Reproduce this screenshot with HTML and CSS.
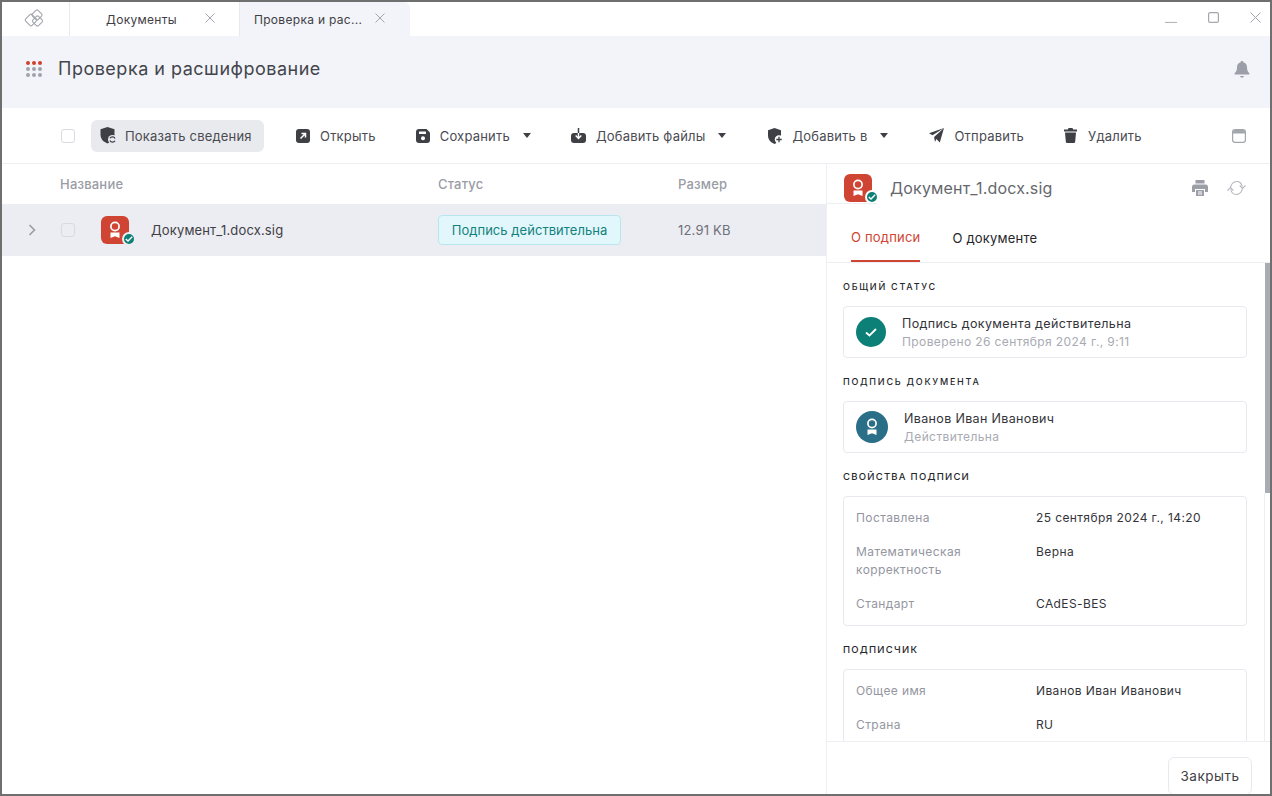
FILE: index.html
```html
<!DOCTYPE html>
<html lang="ru">
<head>
  <meta charset="UTF-8" />
  <title>Проверка и расшифрование</title>
  <link rel="stylesheet" href="styles.css">
</head>
<body>
<div class="window">

  <div class="tabbar">
    <div class="logo-cell">
      <svg width="24" height="22" viewBox="0 0 24 22" fill="none" stroke="#a4a6ae" stroke-width="1.100">
        <rect x="4.500" y="7.500" width="9" height="9" rx="1.500" transform="rotate(-45 9 12)"/>
        <rect x="11" y="3" width="8" height="8" rx="1.500" transform="rotate(-45 15 7)"/>
        <rect x="11.500" y="9" width="8" height="8" rx="1.500" transform="rotate(-45 15.500 13)"/>
      </svg>
    </div>
    <div class="tab">
      <span class="tab-title">Документы</span>
      <svg class="tab-close" width="10" height="10" viewBox="0 0 10 10" stroke="#a4a6ae" stroke-width="1"><path d="M.5.5l9 9M9.500.5l-9 9"/></svg>
    </div>
    <div class="tab tab-active">
      <span class="tab-title">Проверка и рас...</span>
      <svg class="tab-close" width="10" height="10" viewBox="0 0 10 10" stroke="#a4a6ae" stroke-width="1"><path d="M.5.5l9 9M9.500.5l-9 9"/></svg>
    </div>
    <div class="win-controls">
      <svg width="12" height="11" viewBox="0 0 12 11" stroke="#b4b6bd" stroke-width="1.200"><path d="M0 10.500h12"/></svg>
      <svg width="11" height="11" viewBox="0 0 11 11" fill="none" stroke="#a4a6ae" stroke-width="1.200"><rect x=".6" y=".6" width="9.800" height="9.800" rx="1.500"/></svg>
      <svg width="11" height="11" viewBox="0 0 11 11" stroke="#a4a6ae" stroke-width="1"><path d="M.5.5l10 10M10.500.5l-10 10"/></svg>
    </div>
  </div>

  <div class="header">
    <div class="dots">
      <i class="dot red"></i><i class="dot red"></i><i class="dot red"></i>
      <i class="dot"></i><i class="dot"></i><i class="dot"></i>
      <i class="dot"></i><i class="dot"></i><i class="dot"></i>
    </div>
    <h1>Проверка и расшифрование</h1>
    <svg class="bell" width="16" height="17" viewBox="0 0 16 17" fill="#9c9ea8"><path d="M8 0c.8 0 1.300.5 1.400 1.200C11.700 1.800 13 3.800 13 6.200c0 3 .7 4.500 2.300 6 .4.400.2 1.300-.6 1.300H1.300c-.8 0-1-.9-.6-1.300C2.300 10.700 3 9.200 3 6.200c0-2.400 1.300-4.400 3.600-5C6.700.5 7.200 0 8 0z"/><path d="M5.800 15h4.400c-.3.900-1.200 1.500-2.200 1.500S6.100 15.900 5.800 15z"/></svg>
  </div>

  <div class="toolbar">
    <span class="checkbox toolbar-check"></span>
    <button class="tool tool-active">
      <svg width="17" height="17" viewBox="0 0 17 17"><path fill="#3f4045" d="M7.500 0l7 2.300v5.200C14.500 12 11.500 15 7.500 16.500 3.500 15 .5 12 .5 7.500V2.300z"/><circle cx="12.500" cy="12.500" r="4.500" fill="#e9eaee"/><path fill="none" stroke="#3f4045" stroke-width="1.300" d="M15 11.500a2.800 2.800 0 0 0-5-.2M10 13.500a2.800 2.800 0 0 0 5 .2"/></svg>
      Показать сведения
    </button>
    <button class="tool tool-open">
      <svg width="14" height="14" viewBox="0 0 14 14"><rect width="14" height="14" rx="3" fill="#3f4045"/><path d="M4.500 9.500l5-5M5.500 4.500h4v4" fill="none" stroke="#fff" stroke-width="1.500"/></svg>
      Открыть
    </button>
    <button class="tool tool-save">
      <svg width="14" height="14" viewBox="0 0 14 14"><path fill="#3f4045" d="M3 0h7.500L14 3.500V11a3 3 0 0 1-3 3H3a3 3 0 0 1-3-3V3a3 3 0 0 1 3-3z"/><rect x="3" y="2.500" width="7" height="2.500" rx=".5" fill="#fff"/><circle cx="7" cy="9.300" r="2" fill="#fff"/></svg>
      Сохранить
      <i class="caret"></i>
    </button>
    <button class="tool tool-add">
      <svg width="15" height="15" viewBox="0 0 15 15"><path fill="#3f4045" d="M3 5h9a3 3 0 0 1 3 3v4a3 3 0 0 1-3 3H3a3 3 0 0 1-3-3V8a3 3 0 0 1 3-3z"/><path d="M7.500 5v4.500M4.700 7.500l2.800 3 2.800-3" fill="none" stroke="#fff" stroke-width="1.400"/><path d="M7.500 0v5" stroke="#3f4045" stroke-width="1.500"/></svg>
      Добавить файлы
      <i class="caret"></i>
    </button>
    <button class="tool tool-addto">
      <svg width="15" height="16" viewBox="0 0 15 16"><path fill="#3f4045" d="M6.500 0l6.500 2.200v5.300C13 11.500 10.500 14.500 6.500 16 2.500 14.500 0 11.500 0 7.500V2.200z"/><circle cx="11" cy="11.500" r="4.200" fill="#fff"/><path d="M11 8.800v5.400M8.300 11.500h5.400" stroke="#3f4045" stroke-width="1.300"/></svg>
      Добавить в
      <i class="caret"></i>
    </button>
    <button class="tool tool-send">
      <svg width="15" height="15" viewBox="0 0 15 15"><path fill="#3f4045" d="M15 0L10.800 14.500 7.400 11 6 14l-.9-5L15 0 3.500 7.300 0 5.300z"/></svg>
      Отправить
    </button>
    <button class="tool tool-delete">
      <svg width="13" height="15" viewBox="0 0 13 15"><path fill="#3f4045" d="M4.500 0h4l.6 1.500H13v2H0v-2h3.900zM1 4.500h11l-.8 9a1.500 1.500 0 0 1-1.500 1.500H3.300a1.500 1.500 0 0 1-1.500-1.500z"/></svg>
      Удалить
    </button>
    <svg class="panel-toggle" width="14" height="14" viewBox="0 0 14 14"><rect x=".6" y=".6" width="12.800" height="12.800" rx="2.400" fill="#fff" stroke="#a4a6ae" stroke-width="1.200"/><path d="M1 3a2 2 0 0 1 2-2h8a2 2 0 0 1 2 2v1.500H1z" fill="#a4a6ae"/></svg>
  </div>

  <div class="content">
    <div class="files">
      <div class="files-head">
        <span class="col-name">Название</span>
        <span class="col-status">Статус</span>
        <span class="col-size">Размер</span>
      </div>
      <div class="file-row">
        <svg class="chevron" width="8" height="12" viewBox="0 0 8 12" fill="none" stroke="#9a9ca5" stroke-width="1.600"><path d="M1.500 1l5 5-5 5"/></svg>
        <span class="checkbox row-check"></span>
        <span class="file-icon">
          <svg width="14" height="18" viewBox="0 0 14 18"><circle cx="7" cy="5.500" r="4.100" fill="none" stroke="#fff" stroke-width="1.700"/><path fill="#fff" d="M2.500 11.500h9v5.500L7 15.300 2.500 17z"/></svg>
          <span class="badge"><svg width="8" height="6" viewBox="0 0 8 6" fill="none" stroke="#fff" stroke-width="1.400"><path d="M.8 3l2.200 2L7.200.8"/></svg></span>
        </span>
        <span class="file-name">Документ_1.docx.sig</span>
        <span class="status-pill">Подпись действительна</span>
        <span class="file-size">12.91 KB</span>
      </div>
    </div>

    <aside class="details">
      <div class="details-head">
        <span class="file-icon">
          <svg width="14" height="18" viewBox="0 0 14 18"><circle cx="7" cy="5.500" r="4.100" fill="none" stroke="#fff" stroke-width="1.700"/><path fill="#fff" d="M2.500 11.500h9v5.500L7 15.300 2.500 17z"/></svg>
          <span class="badge badge-white"><svg width="8" height="6" viewBox="0 0 8 6" fill="none" stroke="#fff" stroke-width="1.400"><path d="M.8 3l2.200 2L7.200.8"/></svg></span>
        </span>
        <span class="details-title">Документ_1.docx.sig</span>
        <svg class="print" width="16" height="16" viewBox="0 0 16 16" fill="#9c9ea8"><path d="M3.500 0h9v3.500h-9z"/><path d="M2.500 4.500h11A2.500 2.500 0 0 1 16 7v5h-3v-3H3v3H0V7a2.500 2.500 0 0 1 2.500-2.500z"/><path d="M4 10h8v6H4z"/><path d="M6 12h4M6 14h4" stroke="#fff"/></svg>
        <svg class="refresh" width="19" height="16" viewBox="0 0 19 16" fill="none" stroke="#b4b6bd" stroke-width="1.100"><path d="M3.500 8.500C3.500 4.500 6.300 1.500 9.800 1.500c2.700 0 4.700 1.800 5.400 5"/><path d="M12.700 5.500l2.800 2.800 3-2.800"/><path d="M15.500 7.500c0 4-2.800 7-6.300 7-2.700 0-4.700-1.800-5.400-5"/><path d="M.5 10.500l3-2.800 2.800 2.800"/></svg>
      </div>
      <div class="details-tabs">
        <span class="dtab dtab-active">О подписи</span>
        <span class="dtab">О документе</span>
      </div>

      <div class="details-body">
        <div class="scroll-thumb"></div>
        <h2>ОБЩИЙ СТАТУС</h2>
        <div class="card card-status">
          <span class="round round-green"><svg width="12" height="9" viewBox="0 0 12 9" fill="none" stroke="#fff" stroke-width="1.800"><path d="M1 4.500l3.500 3L11 1"/></svg></span>
          <div class="card-text">
            <div class="card-main">Подпись документа действительна</div>
            <div class="card-sub">Проверено 26 сентября 2024 г., 9:11</div>
          </div>
        </div>

        <h2>ПОДПИСЬ ДОКУМЕНТА</h2>
        <div class="card card-status">
          <span class="round round-blue"><svg width="14" height="18" viewBox="0 0 14 18"><circle cx="7" cy="5.500" r="4.100" fill="none" stroke="#fff" stroke-width="1.700"/><path fill="#fff" d="M2.500 11.500h9v5.500L7 15.300 2.500 17z"/></svg></span>
          <div class="card-text">
            <div class="card-main">Иванов Иван Иванович</div>
            <div class="card-sub">Действительна</div>
          </div>
        </div>

        <h2 class="h2-tight">СВОЙСТВА ПОДПИСИ</h2>
        <div class="card card-props">
          <div class="prop"><span class="prop-key">Поставлена</span><span class="prop-val">25 сентября 2024 г., 14:20</span></div>
          <div class="prop"><span class="prop-key">Математическая корректность</span><span class="prop-val">Верна</span></div>
          <div class="prop"><span class="prop-key">Стандарт</span><span class="prop-val">CAdES-BES</span></div>
        </div>

        <h2 class="h2-tight">ПОДПИСЧИК</h2>
        <div class="card card-props">
          <div class="prop"><span class="prop-key">Общее имя</span><span class="prop-val">Иванов Иван Иванович</span></div>
          <div class="prop"><span class="prop-key">Страна</span><span class="prop-val">RU</span></div>
        </div>
      </div>

      <div class="details-foot">
        <button class="close-btn">Закрыть</button>
      </div>
    </aside>
  </div>
</div>
</body>
</html>
```

FILE: styles.css
```css
* {
  box-sizing: border-box;
}
html, body {
  margin: 0;
  height: 100%;
  overflow: hidden;
}
body {
  font-family: Inter, "Noto Sans", sans-serif;
  font-size: 13px;
  letter-spacing: .2px;
  color: #3f4045;
  background-color: white;
}
.window {
  height: 796px;
  border: 2px solid #6f6f6f;
  display: flex;
  flex-direction: column;
  overflow: hidden;
}

/* tabs */
.tabbar {
  height: 34px;
  flex: none;
  display: flex;
  background-color: white;
}
.logo-cell {
  width: 68px;
  border-right: 1px solid #e8e9ee;
  display: flex;
  align-items: center;
  justify-content: center;
  padding-right: 4px;
}
.tab {
  width: 170px;
  display: flex;
  align-items: center;
  position: relative;
  padding-left: 36px;
  font-size: 12px;
  letter-spacing: .3px;
  color: #3f4045;
  border-right: 1px solid #e8e9ee;
}
.tab-active {
  background-color: #f2f4f9;
  padding-left: 14px;
  border-right: none;
  border-top-right-radius: 6px;
}
.tab-close {
  position: absolute;
  left: 135px;
  top: 11px;
}
.win-controls {
  margin-left: auto;
  display: flex;
  align-items: center;
  gap: 31px;
  padding: 0 9px 4px 0;
}

/* page header */
.header {
  height: 72px;
  flex: none;
  background-color: #f2f4f9;
  display: flex;
  align-items: center;
  padding: 0 20px 6px 24px;
}
.dots {
  display: grid;
  grid-template-columns: repeat(3, 4px);
  gap: 2px;
  width: 16px;
}
.dot {
  height: 4px;
  border-radius: 50%;
  background-color: #a0a2ac;
}
.dot.red {
  background-color: #d0402f;
}
h1 {
  font-size: 18px;
  font-weight: 400;
  letter-spacing: .5px;
  margin: -2px 0 0 16px;
  color: #44454b;
}
.bell {
  margin-left: auto;
}

/* toolbar */
.toolbar {
  height: 56px;
  flex: none;
  display: flex;
  align-items: center;
  border-bottom: 1px solid #eeeff3;
  padding-left: 59px;
}
.checkbox {
  display: block;
  width: 14px;
  height: 14px;
  border: 1px solid #d9dae0;
  border-radius: 3px;
  background-color: white;
  flex: none;
}
.toolbar-check {
  margin-right: 16px;
}
.tool {
  font: inherit;
  letter-spacing: inherit;
  color: #4a4b52;
  border: none;
  background: none;
  height: 32px;
  padding: 0;
  display: flex;
  align-items: center;
  white-space: nowrap;
}
.tool-active {
  width: 173px;
  background-color: #e9eaee;
  border-radius: 6px;
  padding-left: 9px;
  gap: 8px;
}
.tool-open {
  margin-left: 32px;
  gap: 10px;
}
.tool-save {
  margin-left: 40px;
  gap: 10px;
}
.tool-add {
  margin-left: 40px;
  gap: 10px;
}
.tool-addto {
  margin-left: 42px;
  gap: 9px;
}
.tool-send {
  margin-left: 41px;
  gap: 10px;
}
.tool-delete {
  margin-left: 40px;
  gap: 11px;
}
.caret {
  width: 0;
  height: 0;
  border-left: 4.5px solid transparent;
  border-right: 4.5px solid transparent;
  border-top: 5px solid #3f4045;
  margin-left: 3px;
}
.tool-addto .caret {
  margin-left: 4px;
}
.panel-toggle {
  margin-left: auto;
  margin-right: 24px;
}

/* main */
.content {
  flex: 1;
  min-height: 0;
  display: flex;
}
.files {
  width: 825px;
  flex: none;
  border-right: 1px solid #eeeff3;
}
.files-head {
  height: 40px;
  display: flex;
  align-items: center;
  padding-left: 58px;
  color: #9a9ca5;
  font-weight: 500;
}
.col-name {
  width: 378px;
}
.col-status {
  width: 240px;
}
.file-row {
  height: 52px;
  background-color: #ecedf2;
  display: flex;
  align-items: center;
  padding-left: 26px;
}
.row-check {
  margin-left: 25px;
  background-color: #ecedf2;
}
.file-icon {
  position: relative;
  width: 28px;
  height: 28px;
  border-radius: 6px;
  background-color: #cf4432;
  display: flex;
  align-items: center;
  justify-content: center;
  flex: none;
}
.file-row .file-icon {
  margin-left: 26px;
}
.badge {
  position: absolute;
  right: -7px;
  bottom: -2px;
  width: 14px;
  height: 14px;
  border-radius: 50%;
  background-color: #0c7f76;
  border: 2px solid #ecedf2;
  display: flex;
  align-items: center;
  justify-content: center;
}
.badge-white {
  border-color: white;
}
.file-name {
  margin-left: 22px;
  width: 287px;
  letter-spacing: .15px;
}
.status-pill {
  width: 183px;
  height: 30px;
  background-color: #e2f7fc;
  border: 1px solid #b9e6ec;
  border-radius: 4px;
  color: #12827c;
  letter-spacing: .05px;
  display: flex;
  align-items: center;
  justify-content: center;
}
.file-size {
  margin-left: 57px;
  color: #6f7078;
}

/* details panel */
.details {
  position: relative;
  flex: 1;
  min-width: 0;
  display: flex;
  flex-direction: column;
}
.details-head {
  height: 48px;
  flex: none;
  display: flex;
  align-items: center;
  padding: 0 24px 0 17px;
  margin-bottom: -8px;
}
.details-head::after {
  content: "";
  position: absolute;
  left: 0;
  top: 39px;
  width: 50px;
  height: 1px;
  background-color: #eeeff3;
}
.details-title {
  font-size: 16px;
  margin-left: 18px;
  letter-spacing: .17px;
  color: #66676e;
}
.print {
  margin-left: auto;
}
.refresh {
  margin-left: 19px;
}
.details-tabs {
  height: 59px;
  flex: none;
  display: flex;
  padding-left: 24px;
  gap: 32px;
  border-bottom: 1px solid #eeeff3;
}
.dtab {
  display: flex;
  align-items: center;
  color: #26272b;
  height: 58px;
  padding-top: 10px;
}
.dtab-active {
  color: #cf4432;
  border-bottom: 2px solid #cf4432;
}
.details-body {
  position: relative;
  flex: 1;
  min-height: 0;
  overflow: hidden;
  padding: 16px 23px 0 16px;
}
.scroll-thumb {
  position: absolute;
  right: 0;
  top: 0;
  width: 5px;
  height: 230px;
  background-color: #a9abb5;
}
.details-body::after {
  content: "";
  position: absolute;
  right: 5px;
  top: 230px;
  bottom: 0;
  width: 1px;
  background-color: #eeeff3;
}
h2 {
  font-size: 9px;
  font-weight: 500;
  letter-spacing: 1.75px;
  line-height: 14px;
  color: #26272b;
  margin: 0 0 13px;
  padding-top: 1px;
  height: 14px;
}
.h2-tight {
  font-size: 9.5px;
  letter-spacing: 1.25px;
}
.card {
  border: 1px solid #e8e9ee;
  border-radius: 4px;
  margin-bottom: 16px;
}
.card-status {
  height: 52px;
  display: flex;
  align-items: center;
  padding-left: 12px;
}
.round {
  width: 30px;
  height: 30px;
  border-radius: 50%;
  display: flex;
  align-items: center;
  justify-content: center;
  flex: none;
}
.round-green {
  background-color: #0c7f76;
}
.round-blue {
  width: 32px;
  height: 32px;
  background-color: #2a6f87;
}
.card-text {
  margin-left: 16px;
  padding-top: 2px;
  line-height: 18px;
}
.card-main {
  font-size: 12.5px;
  letter-spacing: .35px;
  color: #33343a;
}
.card-sub {
  font-size: 12px;
  letter-spacing: .4px;
  color: #a8aab2;
}
.card-props {
  padding: 12px 12px 12px;
}
.prop {
  display: flex;
  line-height: 18px;
  margin-bottom: 16px;
  font-size: 12px;
  letter-spacing: .4px;
}
.prop:last-child {
  margin-bottom: 0;
}
.prop-key {
  width: 180px;
  padding-right: 40px;
  color: #94969f;
}
.prop-val {
  color: #33343a;
}
.details-foot {
  height: 53px;
  flex: none;
  display: flex;
  justify-content: flex-end;
  background-color: white;
  border-top: 1px solid #eeeff3;
  padding: 15px 18px 0 0;
}
.close-btn {
  font: inherit;
  font-size: 13.5px;
  letter-spacing: .5px;
  color: #3f4045;
  width: 84px;
  height: 38px;
  flex: none;
  background-color: white;
  border: 1px solid #e8e9ee;
  border-radius: 6px;
}
```
